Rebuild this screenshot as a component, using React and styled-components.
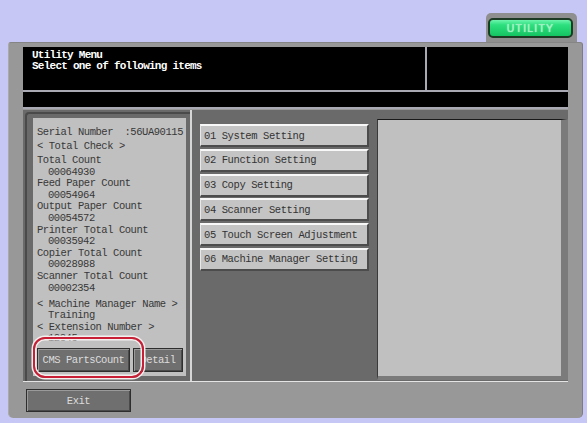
import styled, { createGlobalStyle } from 'styled-components';

const GlobalStyle = createGlobalStyle`
  html, body {
    margin: 0;
    padding: 0;
    background: #c7c7f5;
  }
  body {
    font-family: "Liberation Mono", "DejaVu Sans Mono", monospace;
  }
`;

const Screen = styled.div`
    width: 587px;
    height: 423px;
    background: #c7c7f5;
    display: flex;
    flex-direction: column;
    overflow: hidden;
`;

const TopBar = styled.div`
    height: 42px;
    display: flex;
    justify-content: flex-end;
    align-items: flex-end;
    padding-right: 10px;
    box-sizing: border-box;
`;

const Tab = styled.div`
    width: 91px;
    height: 29px;
    box-sizing: border-box;
    padding: 5px 4px 0 2px;
    background: #8f8f8f;
    border-radius: 5px 5px 0 0;
`;

const UtilityButton = styled.button`
    width: 100%;
    height: 20px;
    box-sizing: border-box;
    border: 2px solid #1c3a24;
    border-radius: 5px;
    background: linear-gradient(#6ef5ae 0%, #2ee07f 30%, #14c463 100%);
    font-family: "Liberation Sans", Arial, sans-serif;
    font-size: 10.5px;
    letter-spacing: 1.2px;
    color: #9af0bd;
    text-shadow: 0 0 1px #f4fff8;
    padding: 0;
    line-height: 14px;
`;

const Frame = styled.div`
    margin-left: 8px;
    width: 575px;
    height: 376px;
    box-sizing: border-box;
    padding: 5px 14px 0 14px;
    background: #989898;
    border-top: 1px solid #858585;
    border-left: 1px solid #a9a9a9;
    border-right: 1px solid #7d7d7d;
    border-radius: 3px 3px 5px 5px;
    display: flex;
    flex-direction: column;
`;

const Header = styled.div`
    display: grid;
    grid-template-columns: 402px 1fr;
    grid-template-rows: 43px 15px;
    gap: 2px;
    background: #a9a9b3;
    border-bottom: 2px solid #a9a9b3;
    margin-top: -1px;
`;

const HeaderCell = styled.div`
    background: #000;
    grid-column: ${p => (p.$wide ? '1 / 3' : 'auto')};
    color: #fff;
    font-weight: bold;
    font-size: 11px;
    letter-spacing: -0.75px;
    line-height: 11px;
    padding: 3px 0 0 9px;
    white-space: pre;
`;

const Content = styled.div`
    margin-top: 1px;
    width: 545px;
    height: 272px;
    box-sizing: border-box;
    background: #6a6a6a;
    border-bottom: 1px solid #e4e4e4;
    display: flex;
`;

const LeftSection = styled.div`
    width: 169px;
    box-sizing: border-box;
    border-right: 2px solid #d6d6d6;
    display: flex;
`;

const Outline = styled.div`
    flex: 1;
    margin: 2px 0 0 2px;
    border-top: 2px solid #4a4a4a;
    border-left: 2px solid #4a4a4a;
    border-top-left-radius: 4px;
    padding: 4px 4px 6px 6px;
    display: flex;
`;

const InfoBox = styled.div`
    position: relative;
    width: 153px;
    height: 258px;
    background: #c0c0c0;
    display: flex;
    flex-direction: column;
    gap: 7px;
`;

const InfoText = styled.div`
    flex: 1;
    overflow: hidden;
    padding: 7px 3px 0 4px;
    color: #383838;
    font-size: 10.5px;
    letter-spacing: -0.45px;
`;

const InfoLine = styled.div`
    display: flex;
    justify-content: space-between;
    white-space: pre;
    line-height: ${p => p.$tall ? '14px' : '11.6px'};
    padding-left: ${p => (p.$indent ? '11px' : '0')};
    margin-top: ${p => p.$gap || 0}px;
`;

const PanelButtons = styled.div`
    display: flex;
    gap: 3px;
    padding: 0 3px 4px 4px;
`;

const DarkButton = styled.button`
    width: ${p => p.$w}px;
    height: ${p => p.$h || 24}px;
    box-sizing: border-box;
    background: #6f6f6f;
    border: 1px solid #2e2e2e;
    box-shadow: inset 1px 1px 0 #9a9a9a, inset -1px -1px 0 #4a4a4a;
    color: #dcdcdc;
    font-family: "Liberation Mono", "DejaVu Sans Mono", monospace;
    font-size: 10.5px;
    letter-spacing: -0.45px;
    padding: 0;
    white-space: pre;
`;

const Ring = styled.div`
    position: absolute;
    left: 0;
    top: 219px;
    width: 111px;
    height: 41px;
    box-sizing: border-box;
    border: 2px solid #c81f37;
    border-radius: 12px;
    box-shadow: 0 0 0 1.5px #f4f0f0, inset 0 0 0 1.5px #f4f0f0;
    pointer-events: none;
`;

const MenuList = styled.div`
    width: 179px;
    padding: 14px 0 0 8px;
    box-sizing: border-box;
    display: flex;
    flex-direction: column;
    gap: 1.75px;
`;

const MenuButton = styled.button`
    width: 169px;
    height: 23px;
    box-sizing: border-box;
    background: #c4c4c4;
    border: none;
    border-top: 2px solid #f8f8f8;
    border-left: 1px solid #e8e8e8;
    border-right: 2px solid #4c4c4c;
    border-bottom: 2px solid #4c4c4c;
    text-align: left;
    padding: 0 0 0 3px;
    color: #333;
    font-family: "Liberation Mono", "DejaVu Sans Mono", monospace;
    font-size: 10.5px;
    letter-spacing: -0.4px;
    white-space: pre;
`;

const RightSection = styled.div`
    flex: 1;
    padding: 9px 0 1px 6px;
    display: flex;
`;

const DisplayPanel = styled.div`
    flex: 1;
    background: #c0c0c0;
    border-top: 1px solid #1a1a1a;
    border-left: 1px solid #3a3a3a;
    border-right: 7px solid #7b7b7b;
    border-bottom: 4px solid #7b7b7b;
`;

const Footer = styled.div`
    padding: 7px 0 0 3px;
`;

const items = [
    '01 System Setting',
    '02 Function Setting',
    '03 Copy Setting',
    '04 Scanner Setting',
    '05 Touch Screen Adjustment',
    '06 Machine Manager Setting',
];

const counters = [
    ['Total Count', '00064930'],
    ['Feed Paper Count', '00054964'],
    ['Output Paper Count', '00054572'],
    ['Printer Total Count', '00035942'],
    ['Copier Total Count', '00028988'],
    ['Scanner Total Count', '00002354'],
];

function App() {
    return (
        <Screen>
            <GlobalStyle />
            <TopBar>
                <Tab>
                    <UtilityButton>UTILITY</UtilityButton>
                </Tab>
            </TopBar>
            <Frame>
                <Header>
                    <HeaderCell>{'Utility Menu\nSelect one of following items'}</HeaderCell>
                    <HeaderCell />
                    <HeaderCell $wide />
                </Header>
                <Content>
                    <LeftSection>
                        <Outline>
                            <InfoBox>
                                <InfoText>
                                    <InfoLine $tall>
                                        <span>Serial Number</span>
                                        <span>:56UA90115</span>
                                    </InfoLine>
                                    <InfoLine $tall>{'< Total Check >'}</InfoLine>
                                    {counters.map(([label, value], i) => (
                                        <div key={label}>
                                            <InfoLine $gap={i === 0 ? 2 : 0}>{label}</InfoLine>
                                            <InfoLine $indent>{value}</InfoLine>
                                        </div>
                                    ))}
                                    <InfoLine $gap={4.5}>{'< Machine Manager Name >'}</InfoLine>
                                    <InfoLine $indent>Training</InfoLine>
                                    <InfoLine>{'< Extension Number >'}</InfoLine>
                                    <InfoLine $indent>12345</InfoLine>
                                </InfoText>
                                <PanelButtons>
                                    <DarkButton $w={93}>CMS PartsCount</DarkButton>
                                    <DarkButton $w={50}>Detail</DarkButton>
                                </PanelButtons>
                                <Ring />
                            </InfoBox>
                        </Outline>
                    </LeftSection>
                    <MenuList>
                        {items.map(label => (
                            <MenuButton key={label}>{label}</MenuButton>
                        ))}
                    </MenuList>
                    <RightSection>
                        <DisplayPanel />
                    </RightSection>
                </Content>
                <Footer>
                    <DarkButton $w={105} $h={23}>Exit</DarkButton>
                </Footer>
            </Frame>
        </Screen>
    );
}

export default App;
